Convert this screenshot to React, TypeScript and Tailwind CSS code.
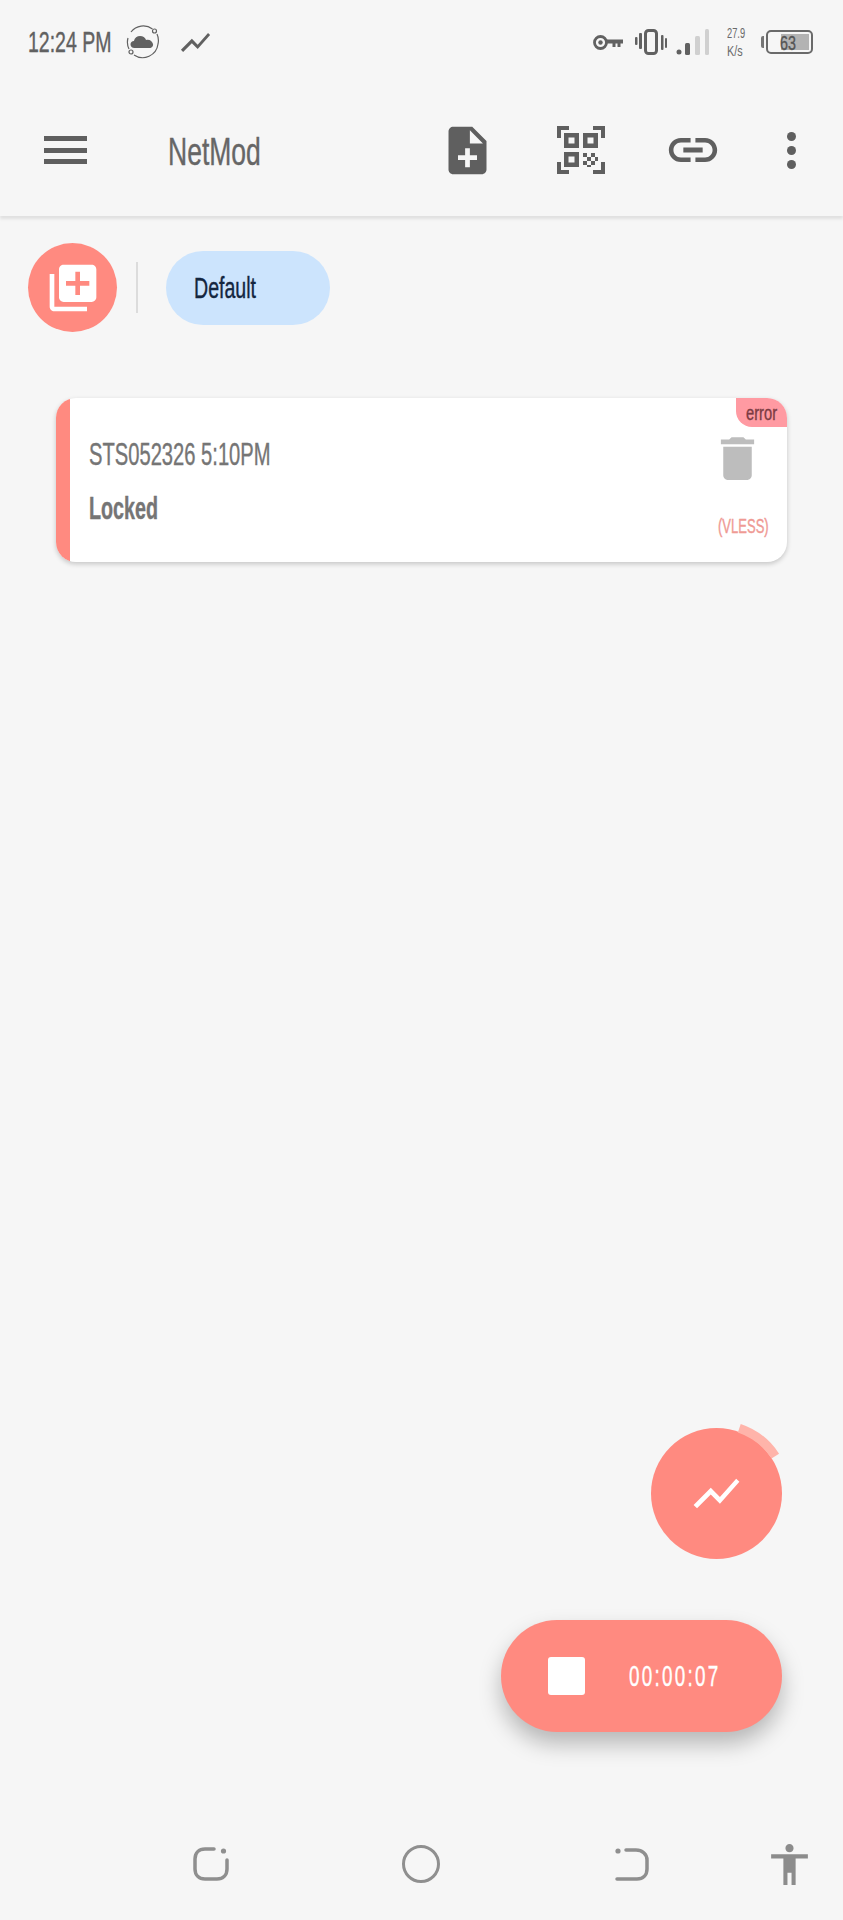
const sans = "font-['Liberation_Sans',Arial,sans-serif] [-webkit-text-stroke:0.4px_currentColor]";

function Icon({ d, size, className }: { d: string; size: number; className?: string }) {
  return (
    <svg width={size} height={size} viewBox="0 0 24 24" fill="currentColor" className={className}>
      <path d={d} />
    </svg>
  );
}

const paths = {
  chart: "M3.5 18.49l6-6.01 4 4L22 6.92l-1.41-1.41-7.09 7.97-4-4L2 16.99z",
  noteAdd: "M14 2H6c-1.1 0-1.99.9-1.99 2L4 20c0 1.1.89 2 1.99 2H18c1.1 0 2-.9 2-2V8l-6-6zm2 14h-3v3h-2v-3H8v-2h3v-3h2v3h3v2zm-3-7V3.5L18.5 9H13z",
  link: "M3.9 12c0-1.71 1.39-3.1 3.1-3.1h4V7H7c-2.76 0-5 2.24-5 5s2.24 5 5 5h4v-1.9H7c-1.71 0-3.1-1.39-3.1-3.1zM8 13h8v-2H8v2zm9-6h-4v1.9h4c1.71 0 3.1 1.39 3.1 3.1s-1.39 3.1-3.1 3.1h-4V17h4c2.76 0 5-2.24 5-5s-2.24-5-5-5z",
  libraryAdd: "M4 6H2v14c0 1.1.9 2 2 2h14v-2H4V6zm16-4H8c-1.1 0-2 .9-2 2v12c0 1.1.9 2 2 2h12c1.1 0 2-.9 2-2V4c0-1.1-.9-2-2-2zm-1 9h-4v4h-2v-4H9V9h4V5h2v4h4v2z",
  trash: "M6 19c0 1.1.9 2 2 2h8c1.1 0 2-.9 2-2V7H6v12zM19 4h-3.5l-1-1h-5l-1 1H5v2h14V4z",
  person: "M12 2c1.1 0 2 .9 2 2s-.9 2-2 2-2-.9-2-2 .9-2 2-2zm9 7h-6v13h-2v-6h-2v6H9V9H3V7h18v2z",
};

function CloudBadge() {
  return (
    <svg width="36" height="36" viewBox="0 0 36 36" fill="none" className="text-[#616161]">
      <path d="M27.500 5A15.500 15.500 0 0 0 6 8M3 14A15.500 15.500 0 0 0 4 25M9 31A15.500 15.500 0 0 0 33 20A15.500 15.500 0 0 0 32 10" stroke="currentColor" strokeWidth="1.200" />
      <circle cx="29.500" cy="7" r="2" stroke="currentColor" strokeWidth="1.200" />
      <circle cx="6" cy="28" r="2" stroke="currentColor" strokeWidth="1.200" />
      <path d="M9.500 24c-2.500 0-4-1.700-4-3.600 0-2 1.500-3.400 3.400-3.500.8-3 3.200-4.900 6.200-4.900 2.800 0 5 1.600 6 4 .5-.2 1-.3 1.600-.3 2.600 0 4.800 2 5.300 4.300.5 2.300-1.200 4-3.500 4z" fill="currentColor" />
    </svg>
  );
}

function Key() {
  return (
    <svg width="30" height="15" viewBox="0 0 30 15" fill="#616161">
      <circle cx="7.500" cy="7.500" r="6" fill="none" stroke="#616161" strokeWidth="2.800" />
      <circle cx="7.500" cy="7.500" r="2.200" />
      <path d="M13 4.500H30V8.500H27.500V12H24.500V8.500H22.500V12H19.500V8.500H13z" />
    </svg>
  );
}

function Vibrate() {
  return (
    <svg width="32" height="26" viewBox="0 0 32 26" fill="#616161">
      <rect x="10.500" y="1.500" width="11" height="23" rx="3" fill="none" stroke="#616161" strokeWidth="3" />
      <rect x="0" y="8" width="2.500" height="8" rx="1" />
      <rect x="4" y="4" width="3" height="16" rx="1" />
      <rect x="26" y="6" width="2.500" height="15" rx="1" />
      <rect x="30" y="9" width="2" height="10" rx="1" />
    </svg>
  );
}

function Signal() {
  return (
    <svg width="34" height="26" viewBox="0 0 34 26">
      <circle cx="3" cy="23" r="2.500" fill="#616161" />
      <rect x="9" y="14" width="5" height="12" rx="1.500" fill="#616161" />
      <rect x="19" y="7" width="5" height="19" rx="1.500" fill="#d0d0d0" />
      <rect x="29" y="0" width="4" height="26" rx="1.500" fill="#d0d0d0" />
    </svg>
  );
}

function QrScan() {
  return (
    <svg width="48" height="48" viewBox="0 0 48 48" fill="#5f5f5f">
      <path d="M0 0h12v4H4v8H0zM36 0h12v12h-4V4h-8zM0 36h4v8h8v4H0zM44 36h4v12H36v-4h8z" />
      <path fillRule="evenodd" d="M7 7h15v15H7zM11.500 11.500v6h6v-6zM26 7h15v15H26zM30.500 11.500v6h6v-6zM7 26h15v15H7zM11.500 30.500v6h6v-6z" />
      <path d="M26 27h4v4h-4zM34 27h4v4h-4zM30 31h4v4h-4zM26 35h4v4h-4zM34 35h4v4h-4zM38 31h3v4h-3zM30 39h4v2h-4z" />
    </svg>
  );
}

function Battery() {
  return (
    <div className="flex items-center gap-[2px]">
      <div className="h-[12px] w-[3px] rounded-l-[2px] bg-[#757575]" />
      <div className="relative flex h-[24px] w-[47px] items-center rounded-[5px] border-[2px] border-[#6a6a6a] pl-[12px]">
        <div className="absolute bottom-[2px] right-[2px] top-[2px] w-[28px] bg-[#b3b3b3]" />
        <span className={`${sans} relative block w-[16px] origin-left scale-x-[0.68] whitespace-nowrap text-[21px] leading-none text-[#555555]`}>63</span>
      </div>
    </div>
  );
}

function StatusBar() {
  return (
    <div className="flex h-[84px] items-center pl-[28px] pr-[30px] text-[#616161]">
      <span className={`${sans} block w-[83px] origin-left scale-x-[0.65] whitespace-nowrap text-[30px] leading-none`}>12:24 PM</span>
      <div className="ml-[14px]"><CloudBadge /></div>
      <Icon d={paths.chart} size={35} className="ml-[17px]" />
      <div className="ml-auto"><Key /></div>
      <div className="ml-[12px]"><Vibrate /></div>
      <div className="ml-[9px]"><Signal /></div>
      <div className={`${sans} ml-[17px] flex w-[18px] flex-col gap-[4px] text-[15px] leading-[14px] text-[#6a6a6a] [-webkit-text-stroke:0px]`}>
        <span className="block origin-left scale-x-[0.62] whitespace-nowrap">27.9</span>
        <span className="block origin-left scale-x-[0.72] whitespace-nowrap">K/s</span>
      </div>
      <div className="ml-[16px]"><Battery /></div>
    </div>
  );
}

function Header() {
  return (
    <div className="flex h-[132px] items-center pl-[44px] text-[#5f5f5f] shadow-[0_3px_3px_rgba(0,0,0,0.09)]">
      <div className="flex h-[28px] w-[43px] flex-col justify-between">
        <div className="h-[5px] bg-[#5f5f5f]" />
        <div className="h-[5px] bg-[#5f5f5f]" />
        <div className="h-[5px] bg-[#5f5f5f]" />
      </div>
      <span className={`${sans} ml-[81px] mt-[2px] block w-[94px] origin-left scale-x-[0.68] whitespace-nowrap text-[39px] leading-none text-[#666666]`}>NetMod</span>
      <Icon d={paths.noteAdd} size={57} className="ml-[177px]" />
      <div className="ml-[61px]"><QrScan /></div>
      <Icon d={paths.link} size={58} className="ml-[59px]" />
      <div className="ml-[65px] flex flex-col gap-[5px]">
        <div className="h-[9px] w-[9px] rounded-full bg-[#5f5f5f]" />
        <div className="h-[9px] w-[9px] rounded-full bg-[#5f5f5f]" />
        <div className="h-[9px] w-[9px] rounded-full bg-[#5f5f5f]" />
      </div>
    </div>
  );
}

function GroupRow() {
  return (
    <div className="flex items-center pl-[28px] pt-[27px]">
      <div className="flex h-[89px] w-[89px] items-center justify-center rounded-full bg-[#ff8a80] text-white">
        <Icon d={paths.libraryAdd} size={56} />
      </div>
      <div className="ml-[19px] h-[51px] w-[2px] bg-[#dcdcdc]" />
      <div className="ml-[28px] flex h-[74px] w-[164px] items-center rounded-full bg-[#cce4fd] pl-[28px]">
        <span className={`${sans} mt-[1px] block w-[62px] origin-left scale-x-[0.675] whitespace-nowrap text-[29px] leading-none text-[#14263f]`}>Default</span>
      </div>
    </div>
  );
}

function ConfigCard() {
  return (
    <div className="relative ml-[56px] mt-[66px] flex h-[164px] w-[731px] overflow-hidden rounded-[20px] bg-white shadow-[0_2px_5px_rgba(0,0,0,0.2)]">
      <div className="w-[14px] bg-[#ff8a80]" />
      <div className="flex flex-1 flex-col pl-[19px] pt-[43px] text-[#757575]">
        <span className={`${sans} block w-[181px] origin-left scale-x-[0.63] whitespace-nowrap text-[32px] leading-[26px]`}>STS052326 5:10PM</span>
        <span className={`${sans} mt-[28px] block w-[69px] origin-left scale-x-[0.616] whitespace-nowrap text-[32px] font-bold leading-[26px]`}>Locked</span>
      </div>
      <div className="flex w-[84px] flex-col items-start pt-[32px]">
        <Icon d={paths.trash} size={57} className="ml-[6px] text-[#bdbdbd]" />
        <span className={`${sans} ml-[15px] mt-[29px] block w-[51px] origin-left scale-x-[0.62] whitespace-nowrap text-[21px] leading-[20px] text-[#ef9a94]`}>(VLESS)</span>
      </div>
      <div className="absolute right-0 top-0 flex h-[29px] w-[51px] items-center rounded-bl-[16px] bg-[#ff9aa2] pl-[10px]">
        <span className={`${sans} block w-[31px] origin-left scale-x-[0.7] whitespace-nowrap text-[21px] leading-none text-[#7b3b42]`}>error</span>
      </div>
    </div>
  );
}

function Fabs() {
  return (
    <div className="flex flex-1 flex-col items-end justify-end pr-[61px]">
      <div className="relative flex h-[131px] w-[131px] items-center justify-center rounded-full bg-[#ff8a80] text-white">
        <svg width="160" height="160" viewBox="0 0 160 160" fill="none" className="absolute left-[-14.500px] top-[-14.500px]">
          <path d="M102.300 14.200A69.500 69.500 0 0 1 138.300 42.100" stroke="#ffb4aa" strokeWidth="9" />
        </svg>
        <Icon d={paths.chart} size={55} className="relative" />
      </div>
      <div className="mt-[61px] flex h-[112px] w-[281px] items-center rounded-full bg-[#ff8a80] pl-[47px] shadow-[0_12px_22px_rgba(0,0,0,0.26)]">
        <div className="h-[38px] w-[37px] rounded-[3px] bg-white" />
        <span className={`${sans} ml-[44px] block w-[92px] origin-left scale-x-[0.65] whitespace-nowrap text-[29px] leading-none tracking-[3.500px] text-white`}>00:00:07</span>
      </div>
    </div>
  );
}

function NavBar() {
  const c = "#8f8f8f";
  return (
    <div className="mt-[76px] flex h-[112px] items-center pl-[193px]">
      <svg width="36" height="34" viewBox="0 0 36 34" fill="none" stroke={c} strokeWidth="3.500" strokeLinecap="round">
        <path d="M21 2H12C6 2 2 6 2 12V22C2 28 6 32 12 32H24C30 32 34 28 34 22V13" />
        <circle cx="30.500" cy="4" r="2.600" fill={c} stroke="none" />
      </svg>
      <div className="ml-[173px] h-[38px] w-[38px] rounded-full border-[3.500px] border-[#8f8f8f]" />
      <svg width="34" height="34" viewBox="0 0 34 34" fill="none" stroke={c} strokeWidth="3.500" strokeLinecap="round" className="ml-[175px]">
        <path d="M11 3H21C27 3 32 7 32 13V22C32 28 28 32 22 32H2" />
        <circle cx="3" cy="4" r="2.600" fill={c} stroke="none" />
      </svg>
      <Icon d={paths.person} size={49} className="ml-[116px] text-[#8c8c8c]" />
    </div>
  );
}

export default function App() {
  return (
    <div className="flex h-[1920px] w-[843px] flex-col overflow-hidden bg-[#f6f6f6]">
      <StatusBar />
      <Header />
      <GroupRow />
      <ConfigCard />
      <Fabs />
      <NavBar />
    </div>
  );
}
